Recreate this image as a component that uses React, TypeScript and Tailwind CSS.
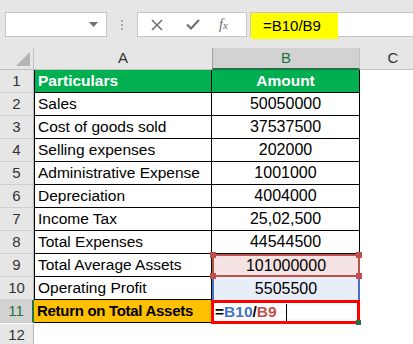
import React from "react";

const rows: { label: string; amount: string }[] = [
  { label: "Sales", amount: "50050000" },
  { label: "Cost of goods sold", amount: "37537500" },
  { label: "Selling expenses", amount: "202000" },
  { label: "Administrative Expense", amount: "1001000" },
  { label: "Depreciation", amount: "4004000" },
  { label: "Income Tax", amount: "25,02,500" },
  { label: "Total Expenses", amount: "44544500" },
];

const font = { fontFamily: '"Liberation Sans", Arial, sans-serif' };

const RowHead = ({ n, active }: { n: number; active?: boolean }) => (
  <div
    className={
      active
        ? "h-[23px] flex items-center justify-center bg-[#d2d2d2] text-[#217346] text-[15px] border-r-2 border-r-[#217346] border-b border-b-[#c8c8c8]"
        : "h-[23px] flex items-center justify-center bg-[#e6e6e6] text-[#333] text-[15px] border-r border-r-[#b8b8b8] border-b border-b-[#d0d0d0]"
    }
  >
    {n}
  </div>
);

const Corner = ({ className }: { className: string }) => (
  <span className={"absolute w-[6px] h-[6px] bg-[#c0504d] " + className} />
);

export default function App() {
  return (
    <div className="w-[413px] h-[344px] overflow-hidden bg-white" style={font}>
      {/* toolbar */}
      <div className="h-[48px] bg-[#e6e6e6] flex items-start pt-[12px] pl-[5px]">
        <div className="w-[102px] h-[25px] bg-white border border-[#c6c6c6] flex items-center justify-end pr-[8px]">
          <svg width="9" height="5" viewBox="0 0 9 5">
            <path d="M0 0h9L4.5 5z" fill="#707070" />
          </svg>
        </div>
        <div className="w-[30px] h-[25px] flex flex-col items-center justify-center gap-[2px]">
          <span className="w-[2px] h-[2px] bg-[#a8a8a8]" />
          <span className="w-[2px] h-[2px] bg-[#a8a8a8]" />
          <span className="w-[2px] h-[2px] bg-[#a8a8a8]" />
        </div>
        <div className="w-[110px] h-[25px] bg-white border border-[#c6c6c6] flex items-center">
          <svg className="ml-[13px]" width="12" height="12" viewBox="0 0 12 12">
            <path d="M1 1l10 10M11 1L1 11" stroke="#707070" strokeWidth="1.6" />
          </svg>
          <svg className="ml-[23px]" width="14" height="11" viewBox="0 0 14 11">
            <path d="M1 5.5l4 4L13 1" stroke="#707070" strokeWidth="2.2" fill="none" />
          </svg>
          <span
            className="ml-[19px] text-[14px] italic text-[#666]"
            style={{ fontFamily: '"Liberation Serif", serif' }}
          >
            f<span className="text-[11px]">x</span>
          </span>
        </div>
        <div className="ml-[3px] flex-1 h-[25px] bg-white border-y border-l border-[#c6c6c6] flex">
          <div className="w-[87px] h-[26px] bg-[#ffff00] flex items-center pl-[12px] text-[15px] text-black">
            =B10/B9
          </div>
        </div>
      </div>

      {/* sheet */}
      <div className="grid grid-cols-[34px_178px_148px_66px]">
        {/* column headers */}
        <div className="h-[22px] bg-[#e6e6e6] border-r border-r-[#c0c0c0] border-b border-b-[#c0c0c0] flex items-end justify-end p-[3px]">
          <svg width="14" height="14" viewBox="0 0 14 14">
            <path d="M14 0V14H0z" fill="#b4b4b4" />
          </svg>
        </div>
        <div className="h-[22px] bg-[#e6e6e6] border-b border-b-[#c0c0c0] flex items-center justify-center text-[15px] text-[#333]">
          A
        </div>
        <div className="h-[22px] bg-[#d2d2d2] border-l border-l-[#a0a0a0] border-r border-r-[#c0c0c0] border-b-2 border-b-[#217346] flex items-center justify-center text-[15px] text-[#217346]">
          B
        </div>
        <div className="h-[22px] bg-[#e6e6e6] border-b border-b-[#c0c0c0] flex items-center justify-center text-[15px] text-[#333]">
          C
        </div>

        {/* row 1 */}
        <RowHead n={1} />
        <div className="h-[23px] bg-[#00b050] border-x border-b border-black flex items-center pl-[3px] text-[15.5px] font-bold text-white">
          Particulars
        </div>
        <div className="h-[23px] bg-[#00b050] border-r border-b border-black flex items-center justify-center text-[15.5px] font-bold text-white">
          Amount
        </div>
        <div className="h-[23px]" />

        {rows.map((r, i) => (
          <React.Fragment key={r.label}>
            <RowHead n={i + 2} />
            <div className="h-[23px] border-x border-b border-black flex items-center pl-[3px] text-[15.5px] text-black whitespace-nowrap">
              {r.label}
            </div>
            <div className="h-[23px] border-r border-b border-black flex items-center justify-center text-[16px] text-black">
              {r.amount}
            </div>
            <div className="h-[23px]" />
          </React.Fragment>
        ))}

        {/* row 9 */}
        <RowHead n={9} />
        <div className="h-[23px] border-x border-b border-black flex items-center pl-[3px] text-[15.5px] text-black">
          Total Average Assets
        </div>
        <div className="relative h-[23px] bg-[#f5e3e3] border-2 border-[#c0504d] flex items-center justify-center text-[16px] text-black">
          101000000
          <Corner className="-left-[4px] -top-[4px]" />
          <Corner className="-right-[4px] -top-[4px]" />
          <Corner className="-left-[4px] -bottom-[4px]" />
          <Corner className="-right-[4px] -bottom-[4px]" />
        </div>
        <div className="h-[23px]" />

        {/* row 10 */}
        <RowHead n={10} />
        <div className="h-[23px] border-x border-b border-black flex items-center pl-[3px] text-[15.5px] text-black">
          Operating Profit
        </div>
        <div className="h-[23px] bg-[#e8eef8] border-x-2 border-[#4472c4] flex items-center justify-center text-[16px] text-black">
          5505500
        </div>
        <div className="h-[23px]" />

        {/* row 11 */}
        <RowHead n={11} active />
        <div className="h-[23px] bg-[#ffc000] border-b border-black flex items-center pl-[3px] text-[15px] tracking-[-0.3px] font-bold text-black whitespace-nowrap">
          Return on Total Assets
        </div>
        <div className="relative h-[24px] -ml-[1px] border-[3px] border-[#ff0000] flex items-center pl-[1px] text-[15.5px] font-bold">
          <span className="text-black">=</span>
          <span className="text-[#4472c4]">B10</span>
          <span className="text-black">/</span>
          <span className="text-[#c0504d]">B9</span>
          <span className="ml-[9px] w-[1px] h-[17px] bg-black" />
          <span className="absolute -right-[4px] -bottom-[4px] w-[5px] h-[5px] bg-[#217346]" />
        </div>
        <div className="h-[23px]" />

        {/* row 12 */}
        <RowHead n={12} />
        <div className="h-[23px]" />
        <div className="h-[23px]" />
        <div className="h-[23px]" />
      </div>
    </div>
  );
}
